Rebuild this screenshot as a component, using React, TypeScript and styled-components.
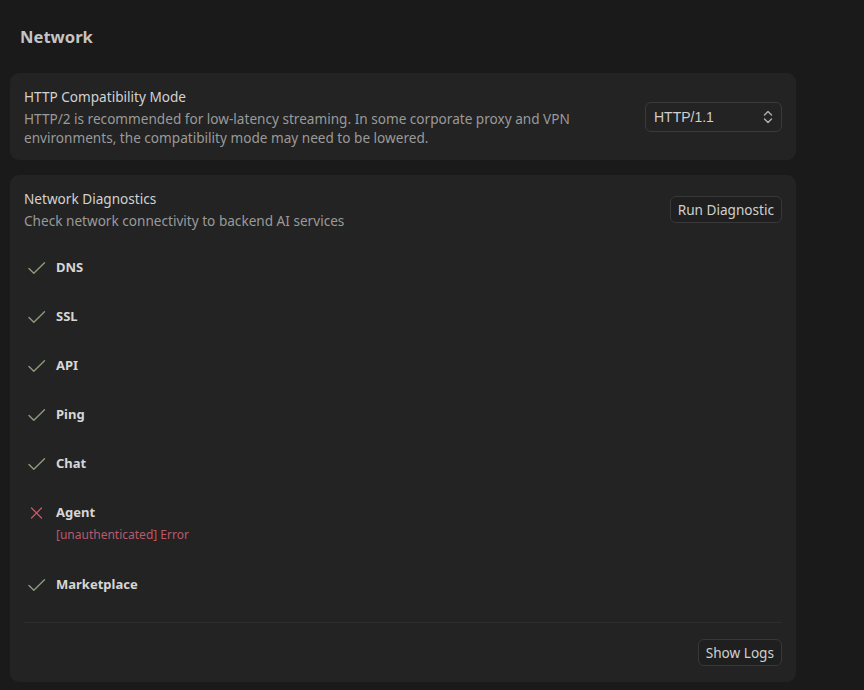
import React from "react";
import styled, { createGlobalStyle } from "styled-components";

const GlobalStyle = createGlobalStyle`
  html, body {
    margin: 0;
    padding: 0;
    background: #1a1a1a;
  }
  body {
    font-family: "Noto Sans", "Open Sans", sans-serif;
    color: #d4d4d4;
  }
`;

type Status = "ok" | "fail";

const checks: { name: string; status: Status; error?: string }[] = [
  { name: "DNS", status: "ok" },
  { name: "SSL", status: "ok" },
  { name: "API", status: "ok" },
  { name: "Ping", status: "ok" },
  { name: "Chat", status: "ok" },
  { name: "Agent", status: "fail", error: "[unauthenticated] Error" },
  { name: "Marketplace", status: "ok" },
];

function CheckIcon() {
  return (
    <svg width="18" height="18" viewBox="0 0 18 18" fill="none">
      <path d="M1 9.5 L5.8 14.2 L16.5 3.8" stroke="#8c9c7e" strokeWidth="1.4" strokeLinecap="round" strokeLinejoin="round" />
    </svg>
  );
}

function CrossIcon() {
  return (
    <svg width="18" height="18" viewBox="0 0 18 18" fill="none">
      <path d="M3.5 4 L13.5 14 M13.5 4 L3.5 14" stroke="#c15b6c" strokeWidth="1.3" strokeLinecap="round" />
    </svg>
  );
}

function Chevrons() {
  return (
    <svg width="12" height="16" viewBox="0 0 12 16" fill="none">
      <path d="M2.5 6 L6 2.5 L9.5 6 M2.5 10 L6 13.5 L9.5 10" stroke="#b0b0b0" strokeWidth="1.4" strokeLinecap="round" strokeLinejoin="round" />
    </svg>
  );
}

export default function App() {
  return (
    <>
      <GlobalStyle />
      <Page>
        <Heading>Network</Heading>
        <Card>
          <SettingRow>
            <TextBlock>
              <Title>HTTP Compatibility Mode</Title>
              <Description>
                HTTP/2 is recommended for low-latency streaming. In some corporate proxy and VPN
                environments, the compatibility mode may need to be lowered.
              </Description>
            </TextBlock>
            <Select>
              <span>HTTP/1.1</span>
              <Chevrons />
            </Select>
          </SettingRow>
        </Card>
        <Card $bottom={16}>
          <DiagHeader>
            <TextBlock>
              <Title>Network Diagnostics</Title>
              <Description>Check network connectivity to backend AI services</Description>
            </TextBlock>
            <Button $offset={7}>Run Diagnostic</Button>
          </DiagHeader>
          <CheckList>
            {checks.map((c) => (
              <CheckItem key={c.name}>
                <IconBox>{c.status === "ok" ? <CheckIcon /> : <CrossIcon />}</IconBox>
                <div>
                  <CheckName>{c.name}</CheckName>
                  {c.error && <ErrorText>{c.error}</ErrorText>}
                </div>
              </CheckItem>
            ))}
          </CheckList>
          <Footer>
            <Button>Show Logs</Button>
          </Footer>
        </Card>
      </Page>
    </>
  );
}

const Page = styled.div`
  width: 786px;
  padding: 25px 10px 8px;
  display: flex;
  flex-direction: column;
  gap: 15px;
`;

const Heading = styled.h1`
  margin: 0 0 9px;
  padding: 0 10px;
  font-size: 16.6px;
  line-height: 24px;
  font-weight: 700;
  color: #c4c4c4;
`;

const Card = styled.div<{ $bottom?: number }>`
  background: #232323;
  border-radius: 9px;
  padding: 14px 14px ${(p) => p.$bottom ?? 13}px;
`;

const SettingRow = styled.div`
  display: flex;
  align-items: center;
  justify-content: space-between;
  gap: 24px;
`;

const TextBlock = styled.div`
  display: flex;
  flex-direction: column;
`;

const Title = styled.div`
  font-size: 13.6px;
  line-height: 20px;
  color: #d2d2d2;
`;

const Description = styled.div`
  margin-top: 2px;
  font-size: 13.6px;
  line-height: 19px;
  color: #9a9a9a;
  max-width: 600px;
`;

const Select = styled.div`
  width: 137px;
  height: 30px;
  box-sizing: border-box;
  border: 1px solid #3a3a3a;
  border-radius: 6px;
  padding: 0 7px 0 8px;
  display: flex;
  align-items: center;
  justify-content: space-between;
  font-family: "Liberation Sans", Arial, sans-serif;
  font-size: 14px;
  color: #cfcfcf;
  flex-shrink: 0;
`;

const DiagHeader = styled.div`
  display: flex;
  justify-content: space-between;
  align-items: flex-start;
`;

const Button = styled.button<{ $offset?: number }>`
  font-family: "Noto Sans", "Open Sans", sans-serif;
  font-size: 13.6px;
  line-height: 19px;
  color: #d0d0d0;
  background: #1f1f1f;
  border: 1px solid #383838;
  border-radius: 6px;
  padding: 3px 7px;
  margin-top: ${(p) => p.$offset ?? 0}px;
  cursor: pointer;
`;

const CheckList = styled.div`
  display: flex;
  flex-direction: column;
  margin-top: 13px;
`;

const CheckItem = styled.div`
  display: flex;
  align-items: flex-start;
  gap: 10px;
  padding: 14px 0 14px 4px;
`;

const IconBox = styled.div`
  width: 18px;
  height: 21px;
  display: flex;
  align-items: center;
  justify-content: center;
`;

const CheckName = styled.div`
  font-size: 13px;
  line-height: 21px;
  font-weight: 700;
  color: #d6d6d6;
`;

const ErrorText = styled.div`
  font-size: 12px;
  line-height: 23px;
  color: #b85a6c;
`;

const Footer = styled.div`
  margin-top: 13px;
  border-top: 1px solid #2e2e2e;
  padding-top: 16px;
  display: flex;
  justify-content: flex-end;
`;
